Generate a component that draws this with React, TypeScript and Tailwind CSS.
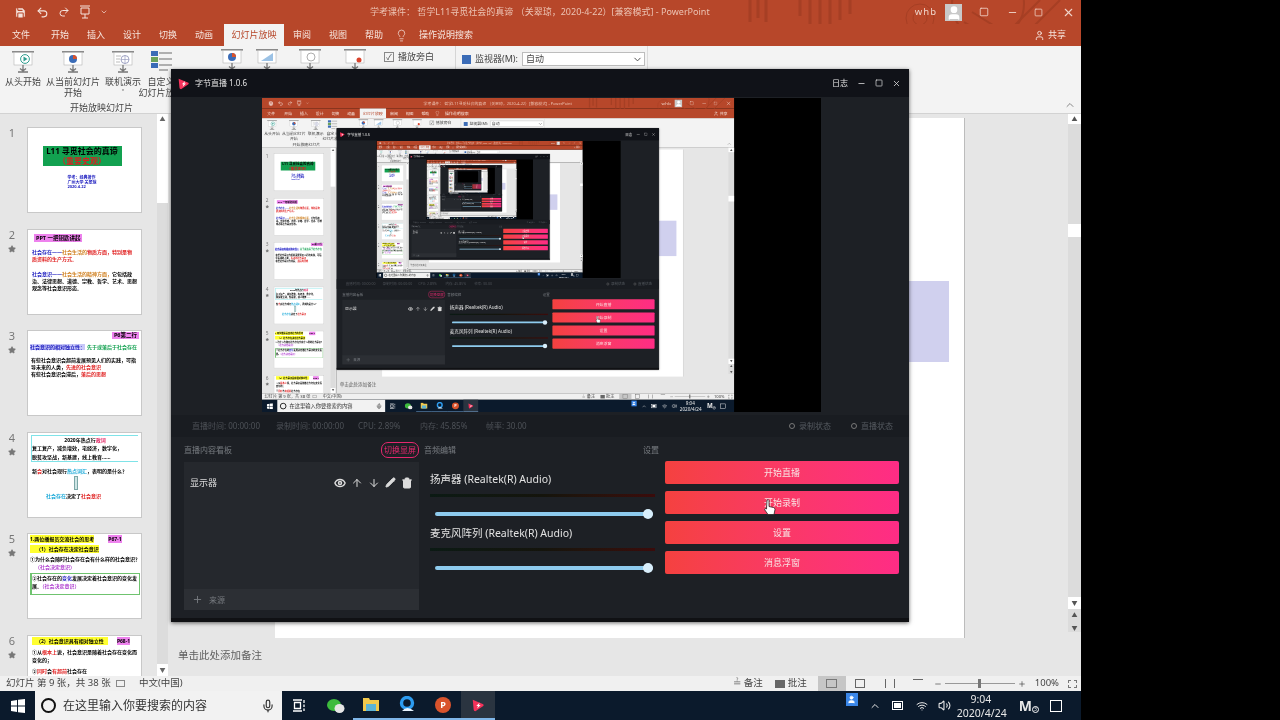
import React from "react";
import { ArrowDown, ArrowUp, ChevronDown, ChevronUp, Eye, Lightbulb, Mic, Minus, Pencil, Plus, Redo2, Save, Square, Star, Trash2, Undo2, User, Volume2, Wifi, X } from "lucide-react";

const MAX_DEPTH = 4;

const tabs = [
  { label: "文件", cls: "w-[42px]" },
  { label: "开始", cls: "w-[36px]" },
  { label: "插入", cls: "w-[36px]" },
  { label: "设计", cls: "w-[36px]" },
  { label: "切换", cls: "w-[36px]" },
  { label: "动画", cls: "w-[36px]" },
];

const AppLogo = ({ size = 14 }: { size?: number }) => (
  <svg width={size} height={size} viewBox="0 0 16 16">
    <path d="M2 2 L14 7 Q15 8 14 9 L5 15 Q3 15 3 13 Z" fill="#f5325b" />
    <path d="M6 9 L10 5 L9 8 L11 8 L7 12 L8 9 Z" fill="#fff" />
  </svg>
);

// projector screen on a stand, the shared shape of the slide show buttons
const ShowIcon = ({ children }: { children: React.ReactNode }) => (
  <svg width="26" height="24" viewBox="0 0 26 24">
    <rect x="2" y="1" width="22" height="1.6" fill="#8a8a8a" />
    <rect x="4" y="2.6" width="18" height="12.4" fill="#fff" stroke="#b5b5b5" strokeWidth="0.6" />
    {children}
    <path d="M13 15 V20 M8 22 H18 M10 18.5 L13 21 L16 18.5" stroke="#777" strokeWidth="1.3" fill="none" />
  </svg>
);

const Pie = ({ a, b }: { a: string; b: string }) => (
  <>
    <circle cx="13" cy="9" r="4" fill={a} />
    <path d="M13 9 V5 A4 4 0 0 1 17 9 Z" fill={b} />
  </>
);

const PlayMark = () => (
  <>
    <circle cx="15" cy="9" r="4.4" fill="#fff" stroke="#2f9e8f" />
    <path d="M13.5 6.6 L17.5 9 L13.5 11.4 Z" fill="#2f9e8f" />
  </>
);

const GlobeMark = () => (
  <>
    <circle cx="15" cy="9.5" r="4" fill="#fff" stroke="#8a8fb5" strokeWidth="0.8" />
    <path d="M11 9.5 H19 M15 5.5 V13.5" stroke="#8a8fb5" strokeWidth="0.6" />
    <path d="M6 6 H11 M6 9 H10 M6 12 H10" stroke="#aaa" strokeWidth="0.8" />
  </>
);

const ListIcon = () => (
  <svg width="26" height="24" viewBox="0 0 26 24">
    <rect x="3" y="1" width="7" height="5" fill="#3b6cb7" />
    <rect x="3" y="7" width="7" height="5" fill="#6ba35a" />
    <rect x="3" y="13" width="7" height="5" fill="#3b6cb7" />
    <path d="M11 3 H24 M11 9 H24 M11 15 H24 M11 20 H20" stroke="#999" strokeWidth="1.4" />
  </svg>
);

const ShowMini = () => (
  <svg width="12" height="14" viewBox="0 0 12 14" fill="none" stroke="#f5e3dc">
    <path d="M1 1 H11 M2 3 H10 V9 H2 Z M6 9 V13 M3 13 H9" />
  </svg>
);

const TitleBar = () => (
  <div className="relative flex h-[24px] items-center overflow-hidden bg-[#b7472a] text-[#f0d5ca]">
    <svg className="absolute left-[740px] top-0" width="341" height="46" viewBox="0 0 341 46" fill="none" stroke="#a63f24">
      <path d="M10 0 V22 M18 0 V18 M26 0 V22 M60 0 V16 M70 0 V24 M80 0 V26 M90 0 V26 M100 0 V20 M110 0 V14" strokeWidth="3" />
      <circle cx="180" cy="18" r="14" />
      <circle cx="180" cy="18" r="7" />
      <circle cx="248" cy="4" r="36" strokeWidth="2" />
      <path d="M224 22 L250 38 M232 12 L264 32 M300 0 L270 30 M320 0 L290 30" strokeWidth="2" />
    </svg>
    <div className="relative flex w-[130px] items-center gap-[9px] pl-[14px] text-[#f5e3dc]">
      <Save size={13} fill="#f5e3dc" stroke="#b7472a" />
      <Undo2 size={13} />
      <Redo2 size={12} />
      <ShowMini />
      <ChevronDown size={8} />
    </div>
    <div className="relative ml-[240px] whitespace-nowrap text-[9px] text-[#ecc3b3]">学考课件： 哲学L11寻觅社会的真谛 （关翠琼，2020-4-22）[兼容模式] - PowerPoint</div>
    <div className="relative ml-auto flex items-center pr-[6px] text-[#f0d5ca]">
      <span className="text-[9.5px] tracking-[1px]">whb</span>
      <span className="ml-[8px] flex h-[17px] w-[17px] items-end justify-center bg-[#c9c9c9]">
        <User size={16} fill="#fff" stroke="#fff" />
      </span>
      <Square size={10} className="ml-[17px]" />
      <Minus size={11} className="ml-[18px]" />
      <Square size={9} className="ml-[16px]" />
      <X size={13} className="ml-[19px]" />
    </div>
  </div>
);

const TabBar = () => (
  <div className="relative flex h-[22px] items-stretch bg-[#b7472a] text-[9px] text-[#f7e6df]">
    {tabs.map((tab) => (
      <span key={tab.label} className={`flex items-center justify-center ${tab.cls}`}>
        {tab.label}
      </span>
    ))}
    <span className="ml-[2px] flex w-[60px] items-center justify-center bg-[#f3f3f3] text-[#b7472a]">幻灯片放映</span>
    <span className="flex w-[36px] items-center justify-center">审阅</span>
    <span className="flex w-[36px] items-center justify-center">视图</span>
    <span className="flex w-[36px] items-center justify-center">帮助</span>
    <span className="ml-[3px] flex items-center gap-[11px]">
      <Lightbulb size={13} strokeWidth={1.3} />
      操作说明搜索
    </span>
    <span className="ml-auto flex items-center gap-[3px] pr-[15px]">
      <User size={11} />
      共享
    </span>
  </div>
);

const RibbonButton = ({ lines, cls, icon }: { lines: string[]; cls: string; icon: React.ReactNode }) => (
  <div className={`flex flex-col items-center whitespace-nowrap pt-[4px] text-[9px] leading-[11px] text-[#444] ${cls}`}>
    {icon}
    <div className="mt-[2px]">{lines[0]}</div>
    <div>{lines[1]}</div>
  </div>
);

const Ribbon = () => (
  <div className="flex h-[68px] border-b border-[#d2d2d2] bg-[#f3f3f3]">
    <div className="flex w-[178px] shrink-0 flex-col">
      <div className="flex h-[56px]">
        <RibbonButton lines={["从头开始", ""]} cls="w-[46px]" icon={<ShowIcon><PlayMark /></ShowIcon>} />
        <RibbonButton lines={["从当前幻灯片", "开始"]} cls="w-[54px]" icon={<ShowIcon><Pie a="#3b6cb7" b="#d9532c" /></ShowIcon>} />
        <RibbonButton lines={["联机演示", "˅"]} cls="w-[46px]" icon={<ShowIcon><GlobeMark /></ShowIcon>} />
        <RibbonButton lines={["自定义", "幻灯片放映"]} cls="w-[30px]" icon={<ListIcon />} />
      </div>
      <div className="pl-[70px] text-[9px] leading-[11px] text-[#444]">开始放映幻灯片</div>
    </div>
    <div className="flex w-[200px] shrink-0 pl-[41px] pt-[2px]">
      <ShowIcon><Pie a="#3b6cb7" b="#d9532c" /></ShowIcon>
      <span className="ml-[9px]"><ShowIcon><path d="M7 13 L19 5 V13 Z" fill="#9cc2e5" /></ShowIcon></span>
      <span className="ml-[17px]"><ShowIcon><circle cx="14" cy="9" r="4" fill="#fff" stroke="#999" strokeWidth="0.8" /></ShowIcon></span>
      <span className="ml-[19px]"><ShowIcon><circle cx="17" cy="12" r="2.5" fill="#d9432c" /></ShowIcon></span>
    </div>
    <div className="w-[78px] shrink-0 border-r border-[#d5d5d5] pt-[4px]">
      <div className="flex items-center gap-[4px] pl-[6px] text-[9px] text-[#444]">
        <span className="flex h-[10px] w-[10px] items-center justify-center border border-[#888] text-[8px] leading-none">✓</span>
        播放旁白
      </div>
    </div>
    <div className="flex h-[26px] w-[189px] shrink-0 items-center pl-[6px] text-[9px] text-[#444]">
      <span className="h-[9px] w-[9px] bg-[#3b6cb7]" />
      <span className="ml-[4px] w-[46px]">监视器(M):</span>
      <span className="ml-[1px] flex h-[14px] flex-1 items-center justify-between border border-[#bdbdbd] bg-white pl-[3px] pr-[1px]">
        自动
        <ChevronDown size={11} />
      </span>
    </div>
    <div className="ml-[2px] h-[68px] w-[1px] bg-[#dcdcdc]" />
    <div className="ml-auto flex items-end pb-[2px] pr-[5px] text-[#888]">
      <ChevronUp size={12} />
    </div>
  </div>
);

const Tag = ({ children, cls }: { children: React.ReactNode; cls: string }) => (
  <span className={`px-[2px] text-[5.5px] font-bold leading-[7px] ${cls}`}>{children}</span>
);

const Thumb1 = () => (
  <div className="flex flex-col items-center pr-[5px] pt-[18px]">
    <div className="w-[79px] bg-[#12a150] text-center text-[8px] font-bold leading-[10px] text-black">
      L11 寻觅社会的真谛
      <div className="text-[#d92020]">（重要史观）</div>
    </div>
    <div className="mt-[10px] text-[4px] font-bold leading-[4.5px] text-[#2020c0]">
      学考：经典著作
      <br />
      广州大学 关翠琼
      <br />
      2020.4.22
    </div>
  </div>
);

const Thumb2 = () => (
  <div className="px-[4px] pt-[5px] text-[5px] leading-[7px]">
    <Tag cls="ml-[2px] bg-[#ee82ee] text-black">PPT 一把钥匙讲起</Tag>
    <div className="mt-[7px] font-bold">
      <span className="text-[#2020c0]">社会存在——</span>
      <span className="text-[#d08020]">社会生活的</span>
      <span className="text-[#e02020]">物质方面，特别是物质资料的生产方式。</span>
    </div>
    <div className="mt-[8px] font-bold text-black">
      <span className="text-[#2020c0]">社会意识——</span>
      <span className="text-[#d08020]">社会生活的精神方面，</span>
      它包括政治、法律思想、道德、宗教、哲学、艺术、思想观念等社会意识形态。
    </div>
  </div>
);

const Thumb3 = () => (
  <div className="flex flex-col px-[2px] pt-[1px] text-[5px] leading-[7px]">
    <Tag cls="self-end bg-[#ee82ee] text-black">P6第二行</Tag>
    <div className="mt-[5px] whitespace-nowrap font-bold">
      <span className="bg-[#c8c8f8] text-[#2020c0]">社会意识的相对独立性：</span>
      <span className="ml-[2px] text-[#12a150]">先于或落后于社会存在</span>
    </div>
    <div className="mt-[6px] px-[1px] font-bold text-black">
      有些社会意识会超前发展预见人们的实践，可指导未来的人类，<span className="text-[#e02020]">先进的社会意识</span>
      <br />
      有些社会意识会滞后，<span className="text-[#e02020]">落后的思想</span>
    </div>
  </div>
);

const Thumb4 = () => (
  <div className="pt-[2px] text-[5px] font-bold leading-[8.5px] text-black">
    <div className="mx-[3px] border-y border-l border-[#7fe3e8] text-center">
      2020年热点行<span className="text-[#e02060]">政词</span>
      <div className="text-left">复工复产，减负增效，宅经济，数字化，</div>
      <div className="text-left">脱贫攻坚战，新基建，线上教育……</div>
    </div>
    <div className="mt-[5px] whitespace-nowrap px-[4px]">
      新<span className="text-[#e02020]">会</span>对社会现行
      <span className="text-[#18a8d8]">热点词汇</span>，表明的是什么？
    </div>
    <div className="ml-[46px] h-[14px] w-[4px] border border-[#7ba7a7] bg-[#cfe5e5]" />
    <div className="mt-[2px] pl-[18px]">
      <span className="text-[#18a8d8]">社会存在</span>决定了<span className="text-[#e02020]">社会意识</span>
    </div>
  </div>
);

const Thumb5 = () => (
  <div className="pl-[2px] pt-[1px] text-[5px] font-bold leading-[8px] text-black">
    <div className="flex items-center">
      <span className="bg-[#ffff30]">1.两位播报员交流社会的思考</span>
      <span className="ml-[14px] bg-[#ee82ee]">P67-1</span>
    </div>
    <div className="mt-[2px] w-fit bg-[#ffff30] pl-[6px]">（1）社会存在决定社会意识</div>
    <div className="mt-[2px] whitespace-nowrap">①为什么会随时社会存在会有什么样的社会意识？</div>
    <div className="pl-[5px] text-[#b040d0]">（社会决定意识）</div>
    <div className="mt-[2px] h-[22px] w-[110px] border border-l-2 border-[#6fc36f]">
      ②社会存在的<span className="text-[#2020c0]">变化</span>发展决定着社会意识的变化发展。
      <span className="text-[#b040d0]">（社会决定意识）</span>
    </div>
  </div>
);

const Thumb6 = () => (
  <div className="pl-[4px] pt-[1px] text-[5px] font-bold leading-[8px] text-black">
    <div className="flex items-center">
      <span className="bg-[#ffff30] px-[4px]">（2）社会意识具有相对独立性</span>
      <span className="ml-[9px] bg-[#ee82ee]">P68-1</span>
    </div>
    <div className="mt-[3px]">
      ①从<span className="text-[#e02020]">根本上</span>说，社会意识是随着社会存在变化而变化的；
    </div>
    <div className="mt-[3px]">
      ②<span className="text-[#e02020]">同时</span>会<span className="text-[#e02020]">有超前</span>社会存在
    </div>
  </div>
);

const slides = [
  { n: 1, star: false, body: <Thumb1 /> },
  { n: 2, star: true, body: <Thumb2 /> },
  { n: 3, star: true, body: <Thumb3 /> },
  { n: 4, star: true, body: <Thumb4 /> },
  { n: 5, star: true, body: <Thumb5 /> },
  { n: 6, star: true, body: <Thumb6 /> },
];

const ThumbPane = () => (
  <div className="flex w-[170px] shrink-0 overflow-hidden bg-[#e6e6e6]">
    <div className="flex h-full w-[157px] flex-col gap-[15.6px] overflow-hidden pt-[13px]">
      {slides.map((slide) => (
        <div key={slide.n} className="flex shrink-0">
          <div className="flex w-[27px] flex-col items-center pr-[3px] text-[#777]">
            <span className="text-[11px] leading-[12px]">{slide.n}</span>
            {slide.star && <Star size={8} fill="#777" className="mt-[4px]" />}
          </div>
          <div className="h-[86px] w-[115px] overflow-hidden border border-[#c8c8c8] bg-white">{slide.body}</div>
        </div>
      ))}
    </div>
    <div className="flex w-[11px] flex-col bg-[#dcdcdc]">
      <div className="flex h-[10px] justify-center bg-white text-[6px] leading-[10px] text-[#666]">▲</div>
      <div className="h-[79px] bg-white" />
      <div className="mt-auto flex h-[12px] justify-center bg-white text-[6px] leading-[12px] text-[#666]">▼</div>
    </div>
  </div>
);

const Editor = () => (
  <div className="flex min-w-0 flex-1 bg-[#e6e6e6]">
    <div className="flex min-w-0 flex-1 flex-col pl-[105px] pt-[4px]">
      <div className="relative h-[520px] w-[690px] border-r border-[#bcbcbc] bg-white">
        <div className="absolute left-[625px] top-[163px] h-[81px] w-[49px] bg-[#d0d0ee]" />
      </div>
      <div className="-ml-[97px] mt-[10px] text-[10.5px] text-[#5f5f5f]">单击此处添加备注</div>
    </div>
    <div className="flex h-[518px] w-[13px] flex-col items-center bg-[#dcdcdc] text-[6px] text-[#555]">
      <div className="h-[10px] w-full bg-white text-center leading-[10px]">▲</div>
      <div className="mt-[100px] h-[13px] w-full bg-white" />
      <div className="mt-auto h-[12px] w-full bg-white text-center leading-[12px]">▼</div>
      <div className="mt-[3px] leading-[7px]">▲</div>
      <div className="mt-[6px] leading-[7px]">▼</div>
    </div>
  </div>
);

const StatusBar = () => (
  <div className="flex h-[15px] items-center bg-[#f0f0f0] pl-[6px] text-[9.5px] text-[#444]">
    <span className="w-[110px]">幻灯片 第 9 张，共 38 张</span>
    <span className="h-[7px] w-[9px] border border-[#888]" />
    <span className="ml-[14px]">中文(中国)</span>
    <span className="ml-auto flex items-center gap-[3px]">
      <span className="text-[#666]">≟</span>备注
    </span>
    <span className="ml-[12px] flex items-center gap-[3px]">
      <span className="h-[8px] w-[10px] bg-[#666]" />批注
    </span>
    <span className="ml-[11px] flex h-[15px] w-[28px] items-center justify-center bg-[#c6c6c6]">
      <span className="h-[9px] w-[11px] border border-[#777]" />
    </span>
    <span className="ml-[9px] h-[9px] w-[10px] border border-[#666]" />
    <span className="ml-[20px] h-[9px] w-[10px] border-x border-[#666]" />
    <span className="ml-[18px] h-[9px] w-[10px] border-t border-[#666]" />
    <Minus size={8} className="ml-[11px]" />
    <span className="ml-[3px] flex h-[1px] w-[70px] items-center justify-center bg-[#999]">
      <span className="h-[9px] w-[3px] bg-[#777]" />
    </span>
    <Plus size={8} className="ml-[3px]" />
    <span className="ml-[9px]">100%</span>
    <span className="ml-[9px] mr-[4px] h-[8px] w-[9px] border border-dashed border-[#777]" />
  </div>
);

const LogoWin = () => (
  <svg width="14" height="14" viewBox="0 0 14 14" fill="#fff">
    <path d="M0 2 L6 1 V6.5 H0 Z M7 .8 L14 0 V6.5 H7 Z M0 7.5 H6 V13 L0 12 Z M7 7.5 H14 V14 L7 13.2 Z" />
  </svg>
);

const Taskbar = () => (
  <div className="flex h-[29px] w-[1081px] items-center bg-[#0b1a2c] text-white">
    <div className="flex h-full w-[35px] items-center justify-center">
      <LogoWin />
    </div>
    <div className="flex h-full w-[247px] items-center bg-[#f2f2f2] pl-[6px] text-[12px] text-[#333]">
      <span className="h-[15px] w-[15px] rounded-full border-2 border-[#111]" />
      <span className="ml-[7px]">在这里输入你要搜索的内容</span>
      <Mic size={14} className="ml-auto mr-[7px]" />
    </div>
    <div className="flex w-[35px] justify-center">
      <svg width="14" height="13" viewBox="0 0 14 13" fill="none" stroke="#fff" strokeWidth="1.3">
        <path d="M0 1 H9 M0 12 H9 M1.5 3.5 H7.5 V9.5 H1.5 Z M11 1 V4 M11 5.5 V8 M11 9.5 V12" />
      </svg>
    </div>
    <div className="ml-[1px] flex h-full items-stretch">
      <div className="flex w-[35px] items-center justify-center">
        <svg width="18" height="16" viewBox="0 0 18 16">
          <ellipse cx="7" cy="7" rx="7" ry="6" fill="#3dbb3d" />
          <ellipse cx="12.5" cy="10.5" rx="5" ry="4.5" fill="#e6e6e6" />
        </svg>
      </div>
      <div className="flex w-[36px] items-center justify-center border-b-2 border-[#7fb6e8]">
        <svg width="16" height="15" viewBox="0 0 16 15">
          <path d="M0 1 H6 L7 3 H16 V14 H0 Z" fill="#f3c94c" />
          <rect x="3" y="7" width="10" height="7" fill="#5db4d6" />
        </svg>
      </div>
      <div className="flex w-[36px] items-center justify-center border-b-2 border-[#7fb6e8]">
        <svg width="16" height="17" viewBox="0 0 16 17">
          <circle cx="8" cy="7" r="5.5" fill="none" stroke="#2d9cf0" strokeWidth="3.4" />
          <path d="M3 15 Q8 9 15 15 Z" fill="#e8f4ff" />
        </svg>
      </div>
      <div className="flex w-[36px] items-center justify-center border-b-2 border-[#7fb6e8]">
        <span className="flex h-[16px] w-[16px] items-center justify-center rounded-full bg-[#d9532c] text-[9px] font-bold">P</span>
      </div>
      <div className="flex w-[34px] items-center justify-center border-b-2 border-[#7fb6e8] bg-[#2a3440]">
        <AppLogo />
      </div>
    </div>
    <div className="relative ml-auto flex items-center pr-[19px] text-[#e8e8e8]">
      <span className="absolute left-[-23px] top-[1px] flex h-[13px] w-[12px] items-center justify-center bg-[#3a86e8]">
        <User size={9} fill="#fff" stroke="#fff" />
      </span>
      <ChevronUp size={12} />
      <span className="ml-[11px] flex h-[9px] w-[11px] items-center border border-white px-[1px]">
        <span className="h-[5px] w-full bg-white" />
      </span>
      <Wifi size={12} className="ml-[13px]" />
      <Volume2 size={13} className="ml-[10px]" />
      <div className="ml-[6px] w-[48px] text-center text-[10.5px] leading-[14px]">
        9:04
        <br />
        2020/4/24
      </div>
      <span className="ml-[14px] flex items-end font-bold leading-none">
        <span className="text-[14px]">M</span>
        <span className="h-[7px] w-[7px] rounded-full border border-white text-center text-[5px] font-normal leading-[5px]">3</span>
      </span>
      <span className="ml-[11px] h-[12px] w-[12px] border border-white" />
    </div>
  </div>
);

const AudioRow = ({ label }: { label: string }) => (
  <div className="h-[54px]">
    <div className="text-[10.5px] leading-[14px] text-[#e2e2e2]">{label}</div>
    <div className="mt-[8px] h-[3px] w-[225px] bg-gradient-to-r from-[#0b1a14] via-[#14140c] to-[#3a0b0b]" />
    <div className="ml-[5px] mt-[15px] flex h-[4px] w-[218px] items-center justify-end rounded-full bg-[#8ecbee]">
      <span className="h-[10px] w-[10px] rounded-full bg-[#d8eefb]" />
    </div>
  </div>
);

const ActionButton = ({ label }: { label: string }) => (
  <div className="flex h-[23px] w-[234px] items-center justify-center rounded-[2px] bg-gradient-to-r from-[#f5413f] to-[#ff2c85] text-[9px] text-[#f8e2e2]">
    {label}
  </div>
);

const LiveWindow = ({ depth }: { depth: number }) => (
  <div className="absolute left-[171px] top-[69px] flex h-[553px] w-[738px] flex-col bg-[#1d2025] shadow-[0_1px_4px_rgba(0,0,0,0.6)]">
    <div className="flex h-[28px] shrink-0 items-center bg-[#101218] pl-[3px] text-[#e5e5e5]">
      <span className="ml-[3px]">
        <AppLogo size={13} />
      </span>
      <span className="ml-[5px] text-[8px]">字节直播 1.0.6</span>
      <span className="ml-auto text-[8px]">日志</span>
      <Minus size={9} className="ml-[9px]" />
      <Square size={8} className="ml-[9px]" />
      <X size={9} className="ml-[9px] mr-[8px]" />
    </div>
    <div className="flex h-[318px] shrink-0 pl-[91px] pt-[1px]">
      {depth < MAX_DEPTH ? (
        <div className="h-[314px] w-[559px] overflow-hidden bg-black blur-[0.3px]">
          <div className="h-[720px] w-[1280px] origin-top-left scale-[0.4367]">
            <Desktop depth={depth + 1} />
          </div>
        </div>
      ) : (
        <div className="h-[314px] w-[559px] bg-black" />
      )}
    </div>
    <div className="flex h-[22px] shrink-0 items-center bg-[#191c21] pl-[21px] text-[8px] text-[#4d5157]">
      <span className="w-[84px]">直播时间: 00:00:00</span>
      <span className="w-[82px]">录制时间: 00:00:00</span>
      <span className="w-[62px]">CPU: 2.89%</span>
      <span className="w-[66px]">内存: 45.85%</span>
      <span>帧率: 30.00</span>
      <span className="ml-auto flex items-center gap-[4px] text-[#555a60]">
        <span className="h-[6px] w-[6px] rounded-full border border-[#777]" />录制状态
      </span>
      <span className="ml-[20px] mr-[16px] flex items-center gap-[4px] text-[#555a60]">
        <span className="h-[6px] w-[6px] rounded-full border border-[#777]" />直播状态
      </span>
    </div>
    <div className="flex h-[25px] shrink-0 items-center pl-[13px] text-[8px] text-[#777b80]">
      <span className="w-[197px]">直播内容看板</span>
      <span className="flex h-[16px] w-[38px] items-center justify-center rounded-[7px] border border-[#e5286e] text-[#e5286e]">切换显屏</span>
      <span className="ml-[5px] w-[219px]">音频编辑</span>
      <span>设置</span>
    </div>
    <div className="flex min-h-0 flex-1 pl-[13px]">
      <div className="flex h-[148px] w-[235px] flex-col bg-[#25282d]">
        <div className="flex h-[41px] items-center pl-[6px] text-[9px] text-[#dcdcdc]">
          显示器
          <span className="ml-auto flex items-center gap-[5px] pr-[6px] text-[#dcdcdc]">
            <Eye size={12} strokeWidth={3} />
            <ArrowUp size={12} />
            <ArrowDown size={12} />
            <Pencil size={11} fill="#dcdcdc" />
            <Trash2 size={12} fill="#dcdcdc" />
          </span>
        </div>
        <div className="mt-auto flex h-[21px] items-center gap-[6px] bg-[#2c2f34] pl-[8px] text-[8px] text-[#777b80]">
          <Plus size={11} />
          来源
        </div>
      </div>
      <div className="ml-[11px] w-[225px] pt-[10px]">
        <AudioRow label="扬声器 (Realtek(R) Audio)" />
        <AudioRow label="麦克风阵列 (Realtek(R) Audio)" />
      </div>
      <div className="relative ml-[10px] -mt-[1px] flex flex-col gap-[7px]">
        <ActionButton label="开始直播" />
        <ActionButton label="开始录制" />
        <ActionButton label="设置" />
        <ActionButton label="消息浮窗" />
        <svg className="absolute left-[98px] top-[37px]" width="13" height="19" viewBox="0 0 13 18">
          <path d="M4 1.5 Q5.5 0.5 6 2 V8 L10.5 9 Q12 9.5 12 11 L11 16 H5 L1.5 11 Q1.5 9.5 3.5 10.5 Z" fill="#fff" stroke="#222" strokeWidth="0.8" />
        </svg>
      </div>
    </div>
    <div className="h-[4px] shrink-0 bg-[#101114]" />
  </div>
);

const Desktop = ({ depth }: { depth: number }) => (
  <div className="relative flex h-[720px] w-[1280px] flex-col overflow-hidden bg-black font-['Noto_Sans','Noto_Sans_CJK_SC',sans-serif]">
    <div className="flex h-[691px] w-[1081px] shrink-0 flex-col">
      <TitleBar />
      <TabBar />
      <Ribbon />
      <div className="flex h-[562px] shrink-0">
        <ThumbPane />
        <Editor />
      </div>
      <StatusBar />
    </div>
    <Taskbar />
    <LiveWindow depth={depth} />
  </div>
);

export default function App() {
  return (
    <div className="blur-[0.3px]">
      <Desktop depth={0} />
    </div>
  );
}
